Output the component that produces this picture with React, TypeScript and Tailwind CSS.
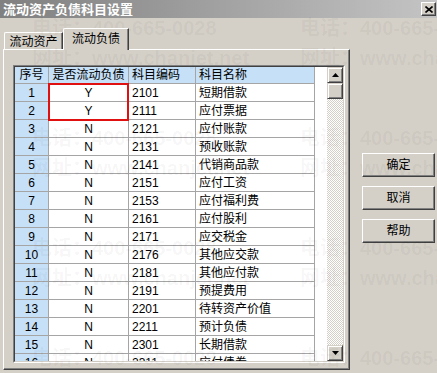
import React from 'react';

const ROWS = [
  { no: 1, flag: 'Y', code: '2101', name: '短期借款' },
  { no: 2, flag: 'Y', code: '2111', name: '应付票据' },
  { no: 3, flag: 'N', code: '2121', name: '应付账款' },
  { no: 4, flag: 'N', code: '2131', name: '预收账款' },
  { no: 5, flag: 'N', code: '2141', name: '代销商品款' },
  { no: 6, flag: 'N', code: '2151', name: '应付工资' },
  { no: 7, flag: 'N', code: '2153', name: '应付福利费' },
  { no: 8, flag: 'N', code: '2161', name: '应付股利' },
  { no: 9, flag: 'N', code: '2171', name: '应交税金' },
  { no: 10, flag: 'N', code: '2176', name: '其他应交款' },
  { no: 11, flag: 'N', code: '2181', name: '其他应付款' },
  { no: 12, flag: 'N', code: '2191', name: '预提费用' },
  { no: 13, flag: 'N', code: '2201', name: '待转资产价值' },
  { no: 14, flag: 'N', code: '2211', name: '预计负债' },
  { no: 15, flag: 'N', code: '2301', name: '长期借款' },
  { no: 16, flag: 'N', code: '2311', name: '应付债券' },
];

const raised =
  'border border-t-white border-l-white border-r-[#404040] border-b-[#404040] shadow-[inset_-1px_-1px_0_#808080]';
const scrollBtn =
  'border border-t-[#d4d0c8] border-l-[#d4d0c8] border-r-[#404040] border-b-[#404040] shadow-[inset_1px_1px_0_#fff,inset_-1px_-1px_0_#808080] bg-[#d4d0c8]';

function Arrow({ up }: { up?: boolean }) {
  return (
    <svg width="7" height="4" viewBox="0 0 7 4">
      <path d={up ? 'M3.5 0 L7 4 L0 4 Z' : 'M0 0 L7 0 L3.5 4 Z'} fill="#000" />
    </svg>
  );
}

function Button({ label }: { label: string }) {
  return (
    <button className={`w-[73px] h-[24px] bg-[#d4d0c8] flex items-center justify-center text-[12px] ${raised}`}>
      {label}
    </button>
  );
}

export default function App() {
  const cell = 'border-r border-b border-[#a5a5a5] flex items-center';
  return (
    <div className="relative w-[437px] h-[373px] overflow-hidden bg-[#d4d0c8] text-[12px] leading-none text-black font-['Liberation_Sans','Noto_Sans_CJK_SC',sans-serif]">
      {/* title bar */}
      <div className="h-[18px] flex items-center justify-between pl-[3px] pr-[1px] bg-gradient-to-r from-[#808080] to-[#c4c4c4]">
        <span className="text-white font-bold text-[13px]">流动资产负债科目设置</span>
        <div className={`w-[15px] h-[14px] bg-[#d4d0c8] flex items-center justify-center ${raised}`}>
          <svg width="8" height="7" viewBox="0 0 8 7">
            <path d="M0.5 0.5 L7.5 6.5 M7.5 0.5 L0.5 6.5" stroke="#000" strokeWidth="1.6" />
          </svg>
        </div>
      </div>

      <div className="flex">
        <div className="pl-[3px] pt-[10px]">
          {/* tabs */}
          <div className="flex items-end h-[21px] pl-[1px]">
            <div className="w-[59px] h-[17px] border-t border-l border-white border-r border-r-[#404040] shadow-[inset_-1px_0_0_#808080] rounded-tl-[2px] flex items-center justify-center pt-[1px]">
              流动资产
            </div>
            <div className="relative z-10 -mb-[1px] w-[66px] h-[22px] bg-[#d4d0c8] border-t border-l border-white border-r border-r-[#404040] shadow-[inset_-1px_0_0_#808080] rounded-tl-[2px] flex items-center justify-center pb-[2px]">
              流动负债
            </div>
          </div>

          {/* panel */}
          <div className="w-[347px] h-[321px] border border-t-white border-l-white border-r-[#404040] border-b-[#404040] shadow-[inset_-1px_-1px_0_#808080] pt-[15px] pl-[9px]">
            <div className="w-[332px] h-[298px] border border-t-[#808080] border-l-[#808080] border-r-white border-b-white">
              <div className="w-full h-full border border-t-[#404040] border-l-[#404040] border-r-[#d4d0c8] border-b-[#d4d0c8] bg-white flex overflow-hidden">
                <div className="relative w-[300px]">
                  <div className="grid grid-cols-[34px_80px_67px_119px]">
                    <div className={`${cell} h-[17px] bg-[#c6e0f8] justify-center`}>序号</div>
                    <div className={`${cell} h-[17px] bg-[#c6e0f8] justify-center`}>是否流动负债</div>
                    <div className={`${cell} h-[17px] bg-[#c6e0f8] pl-[3px]`}>科目编码</div>
                    <div className={`${cell} h-[17px] bg-[#c6e0f8] pl-[3px]`}>科目名称</div>
                    {ROWS.map((r) => (
                      <React.Fragment key={r.no}>
                        <div className={`${cell} h-[18px] bg-[#c6e0f8] justify-center`}>{r.no}</div>
                        <div className={`${cell} h-[18px] justify-center`}>{r.flag}</div>
                        <div className={`${cell} h-[18px] pl-[3px]`}>{r.code}</div>
                        <div className={`${cell} h-[18px] pl-[3px]`}>{r.name}</div>
                      </React.Fragment>
                    ))}
                  </div>
                  <div className="absolute left-[33px] top-[16px] w-[81px] h-[38px] border-2 border-[#e01010]" />
                </div>
                <div className="w-[12px]" />
                {/* scrollbar */}
                <div className="w-[16px] h-full flex flex-col">
                  <div className={`h-[16px] flex items-center justify-center ${scrollBtn}`}>
                    <Arrow up />
                  </div>
                  <div className={`h-[16px] ${scrollBtn}`} />
                  <div className="flex-1 bg-[repeating-conic-gradient(#ffffff_0_25%,#d4d0c8_0_50%)] bg-[length:2px_2px]" />
                  <div className={`h-[16px] flex items-center justify-center ${scrollBtn}`}>
                    <Arrow />
                  </div>
                </div>
              </div>
            </div>
          </div>
        </div>

        {/* buttons */}
        <div className="ml-[12px] pt-[135px] flex flex-col gap-[9px]">
          <Button label="确定" />
          <Button label="取消" />
          <Button label="帮助" />
        </div>
      </div>

      {/* watermark */}
      <div className="absolute inset-0 pointer-events-none text-[20px] font-bold text-black/[0.045] whitespace-nowrap">
        {[0, 1, 2, 3].map((k) => (
          <React.Fragment key={k}>
            <div className="absolute left-[32px]" style={{ top: 18 + k * 110 }}>电话：400-665-0028</div>
            <div className="absolute left-[300px]" style={{ top: 18 + k * 110 }}>电话：400-665-0028</div>
            <div className="absolute left-[32px]" style={{ top: 48 + k * 110 }}>网址：www.chanjet.net</div>
            <div className="absolute left-[300px]" style={{ top: 48 + k * 110 }}>网址：www.chanjet.net</div>
          </React.Fragment>
        ))}
      </div>
    </div>
  );
}
